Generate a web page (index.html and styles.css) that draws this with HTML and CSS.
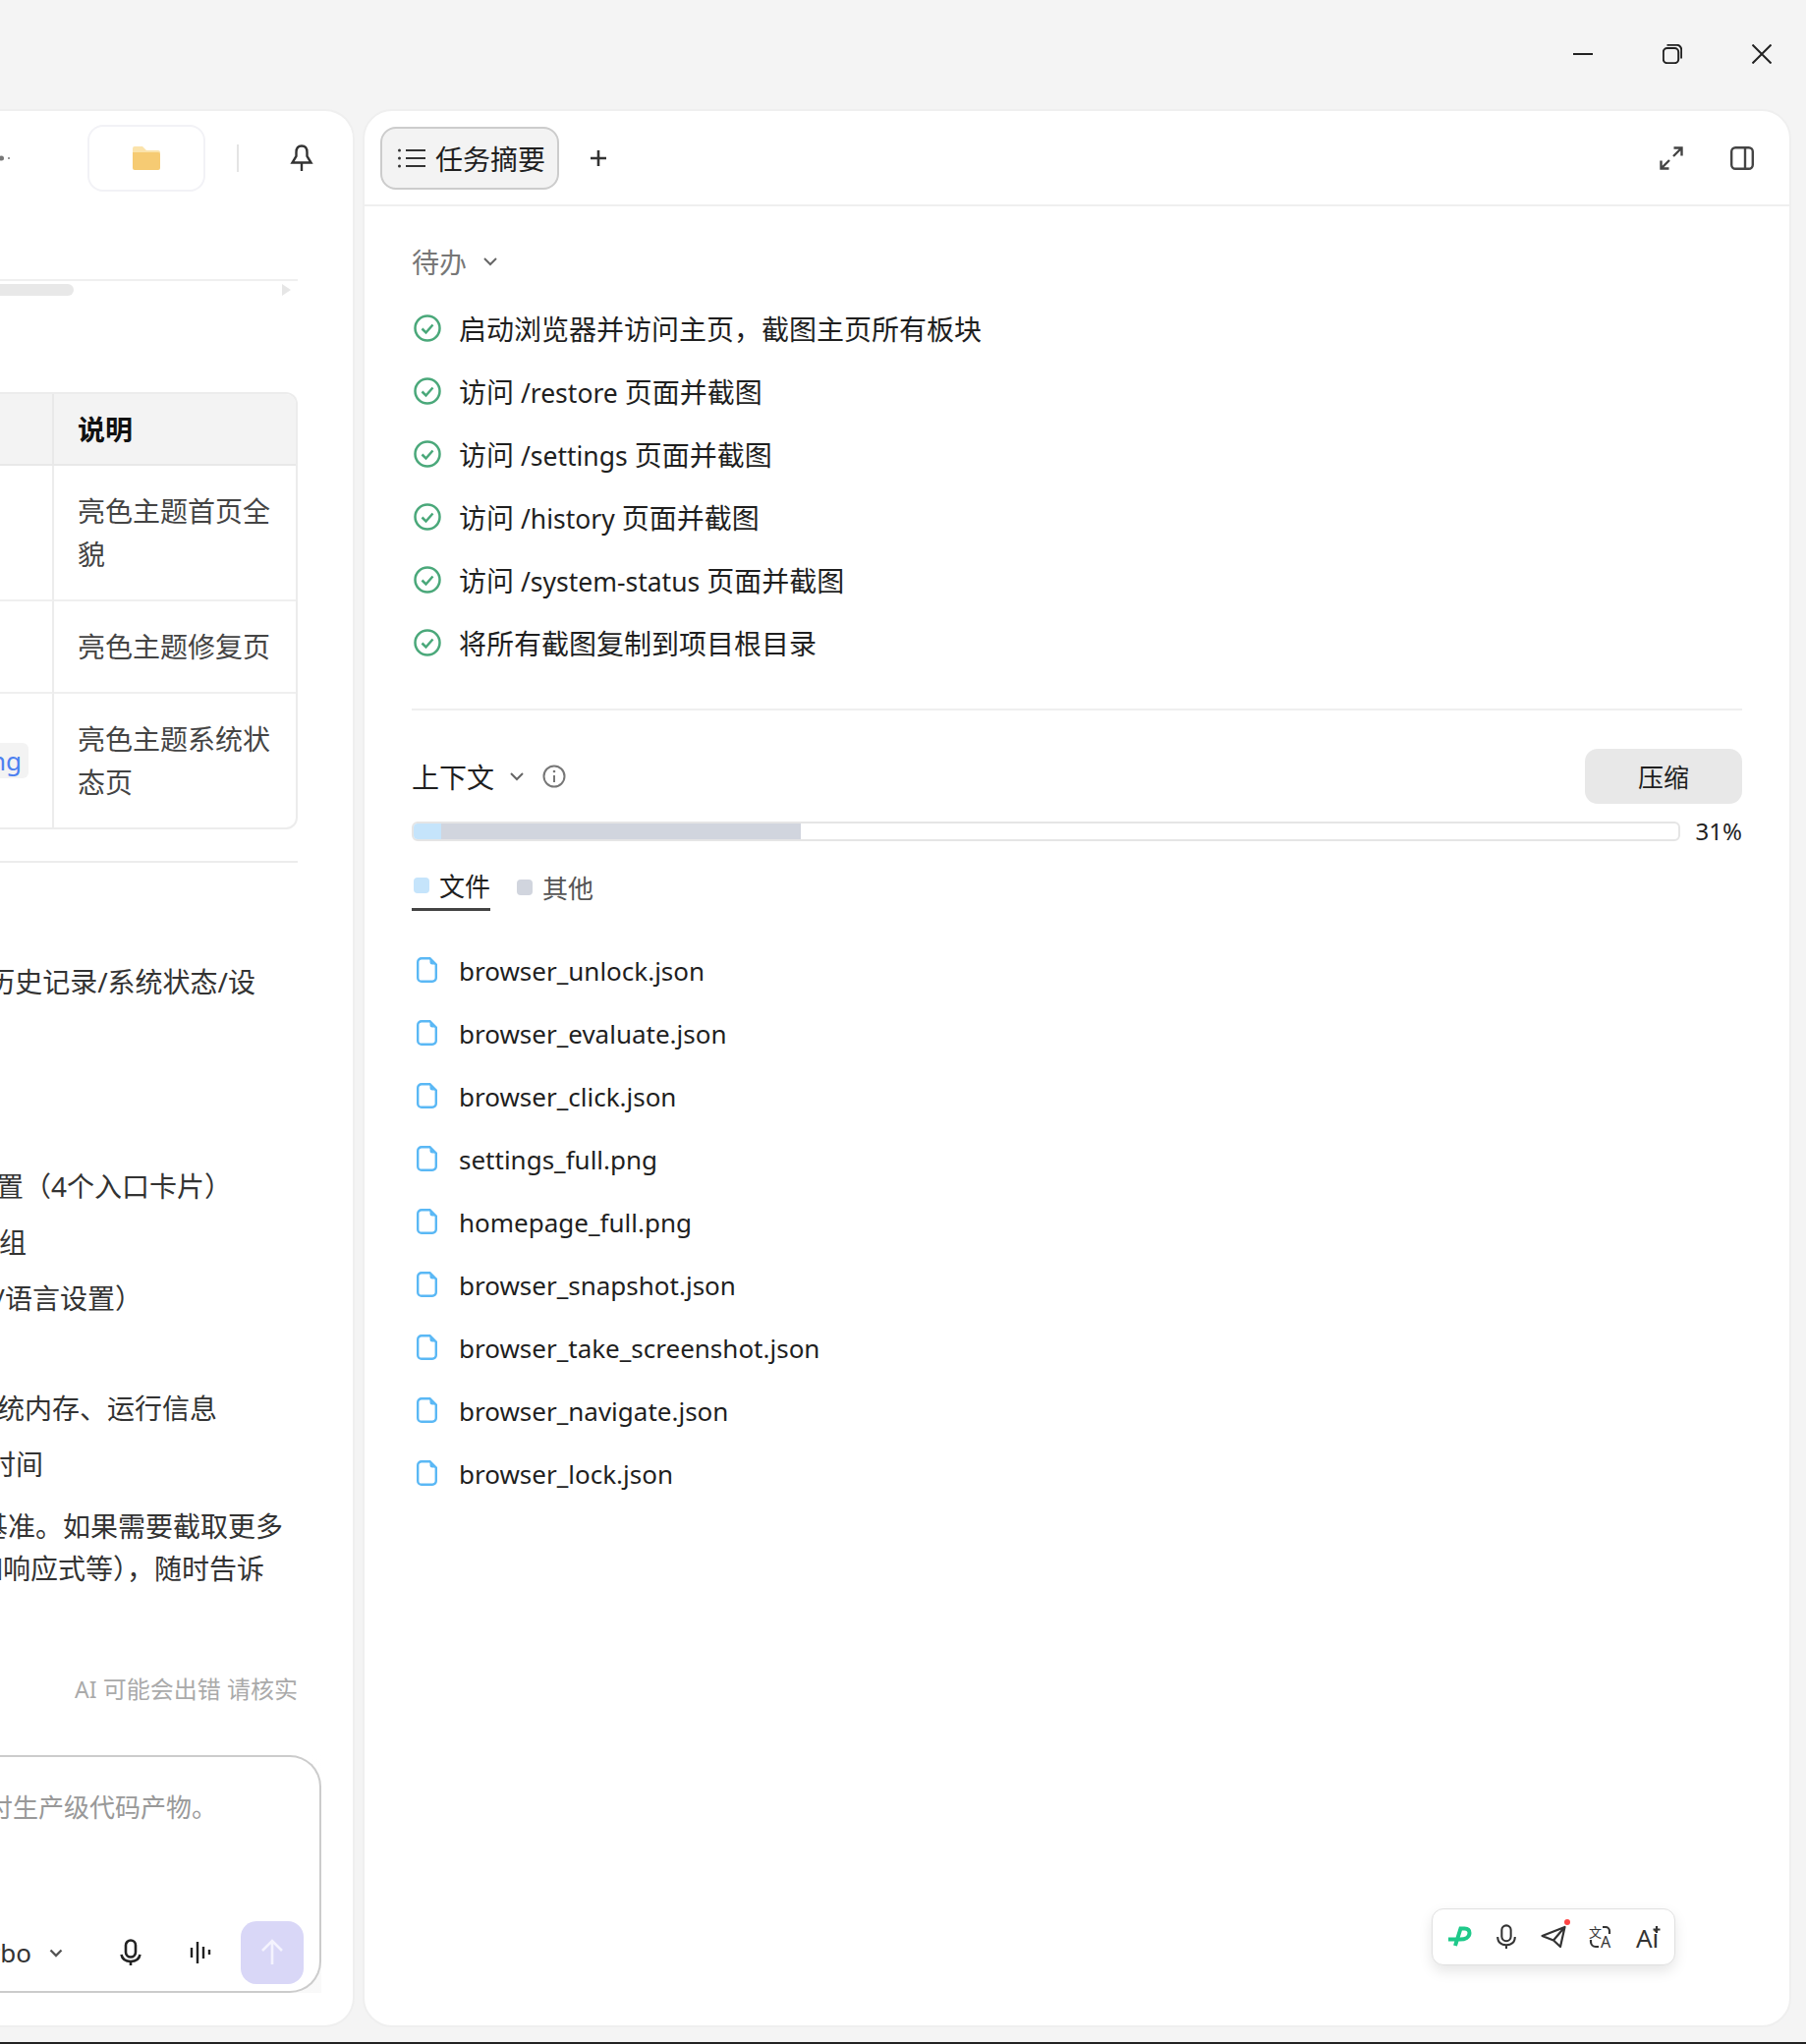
FILE: index.html
```html
<!DOCTYPE html>
<html lang="zh-CN">
<head>
    <meta charset="UTF-8">
    <meta name="viewport" content="width=device-width, initial-scale=1.0">
    <title>任务摘要</title>
    <link rel="stylesheet" href="styles.css">
</head>
<body>
    <div class="window">
        <div class="titlebar">
            <svg class="win-icon" viewBox="0 0 20 20"><path d="M0 10h20"/></svg>
            <svg class="win-icon" viewBox="0 0 20 20"><rect x="0.8" y="4" width="15.4" height="15.2" rx="4"/><path d="M4.5 0.8h10a4.7 4.7 0 0 1 4.7 4.7v9"/></svg>
            <svg class="win-icon" viewBox="0 0 20 20"><path d="M0.5 0.5l19 19M19.500 0.5l-19 19"/></svg>
        </div>

        <div class="main">
            <!-- chat panel, cut off on the left -->
            <section class="chat">
                <div class="chat-head">
                    <svg class="more-dots" viewBox="0 0 10 6"><circle cx="1.500" cy="3" r="2.500"/><circle cx="9" cy="3" r="1"/></svg>
                    <div class="folder-btn">
                        <svg viewBox="0 0 28 24" width="28" height="24"><path fill="#fbe3ab" d="M0 2a2 2 0 0 1 2-2h8l4 4h12a2 2 0 0 1 2 2v4H0z"/><path fill="#f6cb73" d="M0 6h26a2 2 0 0 1 2 2v14a2 2 0 0 1-2 2H2a2 2 0 0 1-2-2z"/></svg>
                    </div>
                    <div class="head-sep"></div>
                    <svg class="pin" viewBox="0 0 24 28" width="24" height="28"><path d="M12 1.500C8 1.500 6.500 4 6.500 8v4L2.500 18.500h19L17.500 12V8c0-4-1.500-6.500-5.500-6.500zM12 18.500V27"/></svg>
                </div>

                <div class="scroller">
                    <div class="scroller-thumb"></div>
                    <div class="scroller-arrow"></div>
                </div>

                <div class="md-table">
                    <div class="th"></div>
                    <div class="th th-last">说明</div>
                    <div class="td td-first row-a"></div>
                    <div class="td row-a">亮色主题首页全貌</div>
                    <div class="td td-first row-b"></div>
                    <div class="td row-b">亮色主题修复页</div>
                    <div class="td td-first row-c"><code class="file-tag">status.png</code></div>
                    <div class="td row-c">亮色主题系统状态页</div>
                </div>
                <div class="chat-rule"></div>

                <div class="msg">
                    <div class="line w-a">包含首页/历史记录/系统状态/设</div>
                    <div class="line w-b gap-big">设置（4个入口卡片）</div>
                    <div class="line w-c gap-item">按钮组</div>
                    <div class="line w-d gap-item">主题/语言设置）</div>
                    <div class="line w-e gap-sect">系统内存、运行信息</div>
                    <div class="line w-f gap-item">时间</div>
                    <div class="line w-g gap-para">为基准。如果需要截取更多</div>
                    <div class="line w-h gap-tight">（如响应式等），随时告诉</div>
                </div>

                <div class="ai-note"><span class="lat-note">AI</span> 可能会出错 请核实</div>

                <div class="composer-fade">
                    <div class="composer">
                        <div class="line w-ph placeholder">交付生产级代码产物。</div>
                        <div class="composer-bar">
                            <span class="model">turbo</span>
                            <svg class="chev-sm" viewBox="0 0 14 9" width="14" height="9"><path d="M1.500 1.500L7 7l5.500-5.500"/></svg>
                            <svg class="mic" viewBox="0 0 22 28" width="22" height="28"><rect x="6" y="1.500" width="10" height="17" rx="5"/><path d="M1.500 16c1 5 5 7 9.500 7s8.500-2 9.500-7"/><path d="M11 23v4"/></svg>
                            <svg class="wave" viewBox="0 0 22 24" width="22" height="24"><path d="M2 7v10M8 1v22M14 6v12M20 9v5"/></svg>
                            <div class="send">
                                <svg viewBox="0 0 24 28" width="24" height="28"><path d="M12 26V2M2 12L12 2l10 10"/></svg>
                            </div>
                        </div>
                    </div>
                </div>
            </section>

            <!-- task summary panel -->
            <section class="summary">
                <div class="summary-head">
                    <div class="tab">
                        <svg class="tab-icon" viewBox="0 0 28 20" width="28" height="20"><path d="M8 2h20M8 10h20M8 18h20"/><circle class="tab-dot" cx="1.500" cy="2" r="1.500"/><circle class="tab-dot" cx="1.500" cy="10" r="1.500"/><circle class="tab-dot" cx="1.500" cy="18" r="1.500"/></svg>
                        <span>任务摘要</span>
                    </div>
                    <svg class="plus" viewBox="0 0 16 16" width="16" height="16"><path d="M8 0v16M0 8h16"/></svg>
                    <div class="head-tools">
                        <svg class="tool" viewBox="0 0 24 24"><path d="M14.500 1.500h8v8M22 2l-8 8M9.500 22.500h-8v-8M2 22l8-8"/></svg>
                        <svg class="tool" viewBox="0 0 24 24"><rect x="1.200" y="1.200" width="21.600" height="21.600" rx="4"/><path d="M15 1.500v21"/></svg>
                    </div>
                </div>

                <div class="summary-body">
                    <div class="todo-title">
                        <span>待办</span>
                        <svg class="chev" viewBox="0 0 14 9" width="14" height="9"><path d="M1 1l6 6 6-6"/></svg>
                    </div>

                    <ul class="todo-list">
                        <li><svg class="check" viewBox="0 0 28 28"><circle cx="14" cy="14" r="12.500"/><path d="M8.500 14.500l4 4 7-8"/></svg><span>启动浏览器并访问主页，截图主页所有板块</span></li>
                        <li><svg class="check" viewBox="0 0 28 28"><circle cx="14" cy="14" r="12.500"/><path d="M8.500 14.500l4 4 7-8"/></svg><span>访问<span class="lat"> /restore </span>页面并截图</span></li>
                        <li><svg class="check" viewBox="0 0 28 28"><circle cx="14" cy="14" r="12.500"/><path d="M8.500 14.500l4 4 7-8"/></svg><span>访问<span class="lat"> /settings </span>页面并截图</span></li>
                        <li><svg class="check" viewBox="0 0 28 28"><circle cx="14" cy="14" r="12.500"/><path d="M8.500 14.500l4 4 7-8"/></svg><span>访问<span class="lat"> /history </span>页面并截图</span></li>
                        <li><svg class="check" viewBox="0 0 28 28"><circle cx="14" cy="14" r="12.500"/><path d="M8.500 14.500l4 4 7-8"/></svg><span>访问<span class="lat"> /system-status </span>页面并截图</span></li>
                        <li><svg class="check" viewBox="0 0 28 28"><circle cx="14" cy="14" r="12.500"/><path d="M8.500 14.500l4 4 7-8"/></svg><span>将所有截图复制到项目根目录</span></li>
                    </ul>

                    <div class="rule"></div>

                    <div class="context-head">
                        <span>上下文</span>
                        <svg class="chev" viewBox="0 0 14 9" width="14" height="9"><path d="M1 1l6 6 6-6"/></svg>
                        <svg class="info" viewBox="0 0 24 24" width="24" height="24"><circle cx="12" cy="12" r="10.500"/><path d="M12 11v7"/><circle class="info-dot" cx="12" cy="7" r="1.300"/></svg>
                        <button class="compress">压缩</button>
                    </div>

                    <div class="progress-row">
                        <div class="progress">
                            <div class="fill-files"></div>
                            <div class="fill-other"></div>
                        </div>
                        <span class="percent">31%</span>
                    </div>

                    <div class="ctx-tabs">
                        <div class="ctx-tab active"><i class="swatch swatch-files"></i>文件</div>
                        <div class="ctx-tab"><i class="swatch swatch-other"></i>其他</div>
                    </div>

                    <ul class="file-list">
                        <li><svg class="file" viewBox="0 0 21 26"><path d="M5 1.200h8.500l6.300 6.300V21a3.800 3.800 0 0 1-3.800 3.800H5A3.800 3.800 0 0 1 1.200 21V5A3.800 3.800 0 0 1 5 1.200z"/><path class="fold" d="M13.500 2v3a2.500 2.500 0 0 0 2.500 2.500h3z"/></svg>browser_unlock.json</li>
                        <li><svg class="file" viewBox="0 0 21 26"><path d="M5 1.200h8.500l6.300 6.300V21a3.800 3.800 0 0 1-3.800 3.800H5A3.800 3.800 0 0 1 1.200 21V5A3.800 3.800 0 0 1 5 1.200z"/><path class="fold" d="M13.500 2v3a2.500 2.500 0 0 0 2.500 2.500h3z"/></svg>browser_evaluate.json</li>
                        <li><svg class="file" viewBox="0 0 21 26"><path d="M5 1.200h8.500l6.300 6.300V21a3.800 3.800 0 0 1-3.800 3.800H5A3.800 3.800 0 0 1 1.200 21V5A3.800 3.800 0 0 1 5 1.200z"/><path class="fold" d="M13.500 2v3a2.500 2.500 0 0 0 2.500 2.500h3z"/></svg>browser_click.json</li>
                        <li><svg class="file" viewBox="0 0 21 26"><path d="M5 1.200h8.500l6.300 6.300V21a3.800 3.800 0 0 1-3.800 3.800H5A3.800 3.800 0 0 1 1.200 21V5A3.800 3.800 0 0 1 5 1.200z"/><path class="fold" d="M13.500 2v3a2.500 2.500 0 0 0 2.500 2.500h3z"/></svg>settings_full.png</li>
                        <li><svg class="file" viewBox="0 0 21 26"><path d="M5 1.200h8.500l6.300 6.300V21a3.800 3.800 0 0 1-3.800 3.800H5A3.800 3.800 0 0 1 1.200 21V5A3.800 3.800 0 0 1 5 1.200z"/><path class="fold" d="M13.500 2v3a2.500 2.500 0 0 0 2.500 2.500h3z"/></svg>homepage_full.png</li>
                        <li><svg class="file" viewBox="0 0 21 26"><path d="M5 1.200h8.500l6.300 6.300V21a3.800 3.800 0 0 1-3.800 3.800H5A3.800 3.800 0 0 1 1.200 21V5A3.800 3.800 0 0 1 5 1.200z"/><path class="fold" d="M13.500 2v3a2.500 2.500 0 0 0 2.500 2.500h3z"/></svg>browser_snapshot.json</li>
                        <li><svg class="file" viewBox="0 0 21 26"><path d="M5 1.200h8.500l6.300 6.300V21a3.800 3.800 0 0 1-3.800 3.800H5A3.800 3.800 0 0 1 1.200 21V5A3.800 3.800 0 0 1 5 1.200z"/><path class="fold" d="M13.500 2v3a2.500 2.500 0 0 0 2.500 2.500h3z"/></svg>browser_take_screenshot.json</li>
                        <li><svg class="file" viewBox="0 0 21 26"><path d="M5 1.200h8.500l6.300 6.300V21a3.800 3.800 0 0 1-3.800 3.800H5A3.800 3.800 0 0 1 1.200 21V5A3.800 3.800 0 0 1 5 1.200z"/><path class="fold" d="M13.500 2v3a2.500 2.500 0 0 0 2.500 2.500h3z"/></svg>browser_navigate.json</li>
                        <li><svg class="file" viewBox="0 0 21 26"><path d="M5 1.200h8.500l6.300 6.300V21a3.800 3.800 0 0 1-3.800 3.800H5A3.800 3.800 0 0 1 1.200 21V5A3.800 3.800 0 0 1 5 1.200z"/><path class="fold" d="M13.500 2v3a2.500 2.500 0 0 0 2.500 2.500h3z"/></svg>browser_lock.json</li>
                    </ul>
                </div>

                <!-- floating helper toolbar -->
                <div class="float-bar">
                    <svg class="fb-logo" viewBox="0 0 26 22" width="26" height="22"><path d="M2 13.500h12c5 0 9.500-2 9.500-6.500 0-3-2-4.500-5-4.500h-4L9 20"/></svg>
                    <svg class="fb-icon" viewBox="0 0 22 28" width="26" height="26"><rect x="6" y="1.500" width="10" height="17" rx="5"/><path d="M1.500 14c0 6 4 9 9.500 9s9.500-3 9.500-9M11 23v4"/></svg>
                    <span class="fb-send">
                        <svg class="fb-icon" viewBox="0 0 26 24" width="26" height="24"><path d="M1.500 11L24.500 2l-4.500 20-7-6.500L1.500 11zM13 15.500L24 2.500"/></svg>
                        <i class="fb-dot"></i>
                    </span>
                    <svg class="fb-icon" viewBox="0 0 26 24" width="26" height="24"><text class="fb-zh" x="1" y="12">文</text><text class="fb-a" x="13" y="23">A</text><path d="M15 2h3a4 4 0 0 1 4 4v3M3 15v2a5 5 0 0 0 5 5h3"/></svg>
                    <svg class="fb-icon" viewBox="0 0 26 24" width="26" height="24"><text class="fb-ai" x="1" y="23">Ai</text><path d="M22 1v7M18.500 4.500h7"/></svg>
                </div>
            </section>
        </div>
        <div class="bottom-edge"></div>
    </div>
</body>
</html>
```

FILE: styles.css
```css
:root {
    --bg: #f4f4f4;
    --line: #efefef;
    --text: #1f1f1f;
    --files: #c5e4fb;
    --other: #d1d5de;
}

* {
    box-sizing: border-box;
}

body {
    margin: 0;
    background-color: var(--bg);
    color: var(--text);
    font-family: "Noto Sans", "Noto Sans CJK SC", sans-serif;
    font-size: 28px;
}

svg {
    display: block;
    flex-shrink: 0;
    fill: none;
}

ul {
    list-style: none;
    margin: 0;
    padding: 0;
}

.window {
    height: 2080px;
    overflow: hidden;
    display: flex;
    flex-direction: column;
}

/* title bar */
.titlebar {
    height: 111px;
    flex-shrink: 0;
    display: flex;
    justify-content: flex-end;
    gap: 71px;
    padding: 45px 35px 0 0;
}

.win-icon {
    width: 20px;
    height: 20px;
    stroke: #222;
    stroke-width: 2;
}

.main {
    height: 1952px;
    display: flex;
    gap: 8px;
    padding-right: 15px;
}

.bottom-edge {
    margin-top: 15px;
    height: 2px;
    background-color: #222;
}

/* left chat panel */
.chat {
    width: 361px;
    flex-shrink: 0;
    background-color: #fff;
    border: 2px solid var(--line);
    border-left: none;
    border-radius: 0 30px 30px 0;
    overflow: hidden;
}

.chat-head {
    height: 96px;
    display: flex;
    align-items: center;
}

.more-dots {
    width: 10px;
    height: 6px;
    fill: #777;
}

.folder-btn {
    width: 120px;
    height: 68px;
    margin-left: 79px;
    border: 2px solid #f2f2f6;
    border-radius: 16px;
    display: flex;
    align-items: center;
    justify-content: center;
}

.head-sep {
    width: 2px;
    height: 28px;
    margin-left: 32px;
    background-color: #e4e4e4;
}

.pin {
    margin-left: 52px;
    stroke: #333;
    stroke-width: 2.4;
}

.scroller {
    width: 303px;
    height: 18px;
    margin-top: 75px;
    border-top: 2px solid var(--line);
    padding-top: 3px;
    display: flex;
    justify-content: space-between;
}

.scroller-thumb {
    width: 75px;
    height: 12px;
    background-color: #e8e8e8;
    border-radius: 0 6px 6px 0;
}

.scroller-arrow {
    width: 0;
    height: 0;
    margin-right: 7px;
    border-left: 9px solid #e6e6e6;
    border-top: 6px solid transparent;
    border-bottom: 6px solid transparent;
}

.md-table {
    width: 303px;
    margin-top: 97px;
    display: grid;
    grid-template-columns: 55px 246px;
    grid-template-rows: 73px 138px 94px 136px;
    border: 2px solid #ececec;
    border-left: none;
    border-radius: 0 12px 12px 0;
    overflow: hidden;
    line-height: 44px;
    color: #444;
}

.th {
    background-color: #f3f3f3;
    border-bottom: 2px solid #e8e8e8;
    border-right: 2px solid #e8e8e8;
}

.th-last {
    border-right: none;
    padding: 0 22px 0 24px;
    display: flex;
    align-items: center;
    font-weight: 700;
    color: #111;
}

.td {
    padding: 0 22px 0 24px;
    display: flex;
    align-items: center;
    border-bottom: 2px solid var(--line);
}

.td-first {
    padding: 0 24px 0 0;
    justify-content: flex-end;
    border-right: 2px solid #ececec;
    white-space: nowrap;
}

.row-c {
    border-bottom: none;
}

.file-tag {
    padding: 0 7px;
    background-color: #f3f3f3;
    border-radius: 6px;
    color: #4d80f0;
    font-family: "Noto Sans", sans-serif;
    font-size: 26px;
    line-height: 36px;
}

.chat-rule {
    width: 303px;
    height: 2px;
    margin-top: 32px;
    background-color: #ececec;
}

.msg {
    margin-top: 99px;
    color: #333;
}

.line {
    display: flex;
    justify-content: flex-end;
    white-space: nowrap;
    line-height: 44px;
}

.w-a { width: 260px; }
.w-b { width: 236px; }
.w-c { width: 27px; }
.w-d { width: 145px; }
.w-e { width: 221px; }
.w-f { width: 44px; }
.w-g { width: 288px; }
.w-h { width: 269px; }
.w-ph { width: 221px; }

.gap-big { margin-top: 164px; }
.gap-item { margin-top: 13px; }
.gap-sect { margin-top: 68px; }
.gap-para { margin-top: 19px; }
.gap-tight { margin-top: -1px; }

.ai-note {
    width: 303px;
    margin-top: 83px;
    text-align: right;
    color: #aaa;
    font-size: 24px;
    line-height: 36px;
}

.lat-note {
    font-size: 23px;
}

.composer-fade {
    width: 327px;
    margin-top: 49px;
    background: linear-gradient(to bottom, #fff, #f9f9f9);
}

.composer {
    height: 242px;
    background-color: #fff;
    border: 2px solid #ccc;
    border-left: none;
    border-radius: 0 32px 32px 0;
    padding-top: 31px;
}

.placeholder {
    color: #999;
    font-size: 26px;
    line-height: 40px;
}

.composer-bar {
    height: 64px;
    margin-top: 96px;
    display: flex;
    align-items: center;
}

.model {
    width: 32px;
    display: flex;
    justify-content: flex-end;
    color: #333;
    font-size: 26px;
}

.chev-sm {
    margin-left: 18px;
    stroke: #555;
    stroke-width: 2.4;
}

.mic {
    margin-left: 58px;
    stroke: #222;
    stroke-width: 2.6;
}

.wave {
    margin-left: 49px;
    stroke: #222;
    stroke-width: 2.4;
}

.send {
    width: 64px;
    height: 64px;
    margin-left: 30px;
    background-color: #d9d7f7;
    border-radius: 16px;
    display: flex;
    align-items: center;
    justify-content: center;
    stroke: #f4f3fe;
    stroke-width: 2.6;
}

.send svg {
    stroke: inherit;
}

/* right summary panel */
.summary {
    position: relative;
    flex: 1;
    background-color: #fff;
    border: 2px solid var(--line);
    border-radius: 30px;
    overflow: hidden;
}

.summary-head {
    height: 97px;
    padding: 16px 36px 0 16px;
    display: flex;
    align-items: flex-start;
    border-bottom: 2px solid var(--line);
}

.tab {
    width: 182px;
    height: 64px;
    display: flex;
    align-items: center;
    gap: 10px;
    padding-left: 16px;
    background-color: #f3f3f3;
    border: 2px solid #ccc;
    border-radius: 16px;
    white-space: nowrap;
}

.tab-icon {
    stroke: #333;
    stroke-width: 2;
}

.tab-dot {
    fill: #333;
    stroke: none;
}

.plus {
    margin: 24px 0 0 32px;
    stroke: #333;
    stroke-width: 2.6;
}

.head-tools {
    margin: 20px 0 0 auto;
    display: flex;
    gap: 48px;
}

.tool {
    width: 24px;
    height: 24px;
    stroke: #444;
    stroke-width: 2.4;
}

.summary-body {
    padding: 36px 48px 0 48px;
}

.todo-title {
    height: 40px;
    display: flex;
    align-items: center;
    gap: 17px;
    color: #777;
}

.chev {
    stroke: #666;
    stroke-width: 2;
}

.todo-list {
    margin-top: 16px;
}

.todo-list li {
    height: 64px;
    display: flex;
    align-items: center;
    gap: 18px;
    padding-left: 2px;
    white-space: nowrap;
}

.lat {
    font-size: 26.5px;
}

.check {
    width: 28px;
    height: 28px;
    stroke: #4aa87a;
    stroke-width: 2.5;
}

.rule {
    height: 2px;
    margin-top: 35px;
    background-color: var(--line);
}

.context-head {
    height: 56px;
    margin-top: 39px;
    display: flex;
    align-items: center;
}

.context-head .chev {
    margin-left: 16px;
}

.info {
    margin-left: 19px;
    stroke: #777;
    stroke-width: 2;
}

.info-dot {
    fill: #777;
    stroke: none;
}

.compress {
    width: 160px;
    height: 56px;
    margin-left: auto;
    border: none;
    border-radius: 13px;
    background-color: #e8e8e8;
    color: var(--text);
    font-family: inherit;
    font-size: 26px;
}

.progress-row {
    height: 20px;
    margin-top: 18px;
    display: flex;
    align-items: center;
    justify-content: space-between;
}

.progress {
    width: 1291px;
    height: 20px;
    display: flex;
    border: 2px solid #e5e5e5;
    border-radius: 6px;
    overflow: hidden;
}

.fill-files {
    width: 28px;
    background-color: var(--files);
}

.fill-other {
    width: 366px;
    background-color: var(--other);
}

.percent {
    font-size: 24px;
    line-height: 24px;
}

.ctx-tabs {
    height: 50px;
    margin-top: 24px;
    display: flex;
    gap: 25px;
    font-size: 26px;
}

.ctx-tab {
    display: flex;
    align-items: center;
    height: 47px;
    padding: 0 0 2px 2px;
    color: #555;
}

.ctx-tab.active {
    border-bottom: 3px solid #444;
    color: var(--text);
}

.swatch {
    width: 16px;
    height: 16px;
    margin-right: 10px;
    border-radius: 4px;
}

.swatch-files {
    background-color: var(--files);
}

.swatch-other {
    background-color: var(--other);
}

.file-list {
    margin-top: 26px;
}

.file-list li {
    height: 64px;
    display: flex;
    align-items: center;
    gap: 22px;
    padding-left: 5px;
    white-space: nowrap;
    font-size: 26px;
}

.file {
    width: 21px;
    height: 26px;
    margin-top: -3px;
    stroke: #5ab8f5;
    stroke-width: 2.4;
}

.fold {
    fill: #5ab8f5;
    stroke: none;
}

/* floats over the panel */
.float-bar {
    position: absolute;
    right: 116px;
    bottom: 61px;
    width: 248px;
    height: 58px;
    padding: 0 14px;
    display: flex;
    align-items: center;
    gap: 22px;
    background-color: #fff;
    border: 1px solid #e0e0e0;
    border-radius: 12px;
    box-shadow: 0 6px 14px rgba(0, 0, 0, 0.1);
}

.fb-logo {
    stroke: #1fc98a;
    stroke-width: 4;
}

.fb-icon {
    stroke: #333;
    stroke-width: 2.2;
    stroke-linejoin: round;
}

.fb-send {
    position: relative;
    display: block;
}

.fb-dot {
    position: absolute;
    top: -6px;
    right: -4px;
    width: 6px;
    height: 6px;
    border-radius: 50%;
    background-color: #f44;
}

.fb-icon text {
    stroke: none;
    fill: #333;
}

.fb-zh {
    font-size: 13px;
}

.fb-a {
    font-size: 16px;
}

.fb-ai {
    font-size: 26px;
}
```
